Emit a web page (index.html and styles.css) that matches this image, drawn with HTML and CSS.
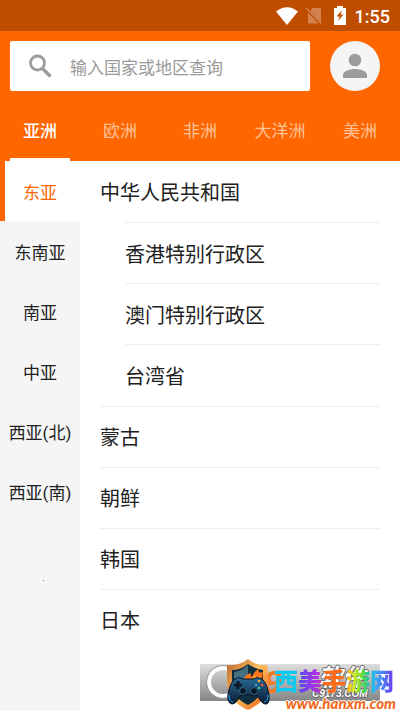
FILE: index.html
```html
<!DOCTYPE html>
<html lang="zh-CN">
<head>
<meta charset="utf-8">
<meta name="viewport" content="width=device-width, initial-scale=1">
<title>选择国家或地区</title>
<link rel="stylesheet" href="styles.css">
</head>
<body>
<div class="status">
  <svg width="24" height="20" viewBox="0 0 24 20" aria-hidden="true"><path fill="#fff" d="M1 5.500Q12-3 23 5.500L12 19Z"/></svg>
  <svg class="sim" width="18" height="18" viewBox="0 0 18 18" aria-hidden="true"><path fill="#d18250" d="M7 1h8q1 0 1 1v13L5.500 4.500ZM3 5.500 13.500 16.500H4q-1 0-1-1Z"/><path stroke="#d18250" stroke-width="1.500" d="M1 1 16.500 16.500"/></svg>
  <svg class="battery" width="14" height="20" viewBox="0 0 14 20" aria-hidden="true"><path fill="#fff" d="M4 0h6v2h3v17H1V2h3Z"/><path fill="#bf4d00" d="M9 4 3.500 10.500h3L5 15l5.500-6.500h-3Z"/></svg>
  <span>1:55</span>
</div>
<header class="header">
  <div class="top">
    <label class="search">
      <svg width="24" height="24" viewBox="0 0 24 24" aria-hidden="true"><circle cx="9.500" cy="9" r="7" fill="none" stroke="#9c9c9c" stroke-width="2.800"/><path d="m14 14 8.500 8.500" stroke="#9c9c9c" stroke-width="3.200"/></svg>
      <input type="text" placeholder="输入国家或地区查询" aria-label="输入国家或地区查询">
    </label>
    <button class="avatar" aria-label="用户">
      <svg width="26" height="26" viewBox="0 0 26 26" aria-hidden="true"><circle cx="13" cy="7" r="6.300" fill="#9c9c9c"/><path fill="#9c9c9c" d="M1 25v-3c0-4 7-6 12-6s12 2 12 6v3Z"/></svg>
    </button>
  </div>
  <nav class="tabs">
    <a class="tab active" href="#asia">亚洲</a>
    <a class="tab" href="#europe">欧洲</a>
    <a class="tab" href="#africa">非洲</a>
    <a class="tab" href="#oceania">大洋洲</a>
    <a class="tab" href="#america">美洲</a>
  </nav>
</header>
<main class="main">
  <nav class="side">
    <a class="region current" href="#east">东亚</a>
    <a class="region" href="#southeast">东南亚</a>
    <a class="region" href="#south">南亚</a>
    <a class="region" href="#central">中亚</a>
    <a class="region" href="#westnorth">西亚(北)</a>
    <a class="region" href="#westsouth">西亚(南)</a>
    <i class="dot"></i>
  </nav>
  <ul class="list">
    <li>中华人民共和国</li>
    <li class="sub">香港特别行政区</li>
    <li class="sub">澳门特别行政区</li>
    <li class="sub">台湾省</li>
    <li>蒙古</li>
    <li>朝鲜</li>
    <li>韩国</li>
    <li>日本</li>
  </ul>
</main>
<div class="mark">
  <div class="bar"><i class="ring"></i><b class="nine">9</b><div class="under">软件</div><div class="domain">C9173.COM</div></div>
  <svg class="shield" width="46" height="52" viewBox="0 0 46 52" aria-hidden="true">
    <defs><linearGradient id="rim" x2="1" y2="1"><stop stop-color="#b5602a"/><stop offset=".45" stop-color="#ffc061"/><stop offset="1" stop-color="#ed5a0b"/></linearGradient><linearGradient id="pad" x2="0" y2="1"><stop stop-color="#286b94"/><stop offset="1" stop-color="#0a1930"/></linearGradient></defs>
    <path fill="url(#rim)" d="M23 0Q31 7 42 6l2 18q-1 18-21 27Q4 43 2 25V6q13 1 21-6Z"/>
    <path fill="#102e40" d="M23 5q7 5 15 6v14q-1 14-15 21Q8 39 7 25V11q9 0 16-6Z"/>
    <path fill="#467080" d="M23 6v17L9 20v-7q8-1 14-7Z"/>
    <path fill="#ff7518" d="M18 22q2-7 8-8-1 3 1 4 2-6 7-8-2 5 4 3l-2 12Z"/><path fill="#ffc72b" d="M22 22q6-1 8-6l1 4 4-3-2 7Z"/>
    <path fill="url(#pad)" stroke="#071326" d="M10 20q3-3 8 0h10q5-3 9 0 5 4 7 16 1 10-4 9-4-1-8-9H16q-5 9-9 9-5-1-4-10 2-12 7-15Z"/>
    <path stroke="#0c1a29" stroke-width="3" d="M9 26h8M13 22v8"/>
    <circle cx="18" cy="32" r="3.500" fill="#091827" stroke="#2b6682"/><circle cx="29" cy="32" r="3.500" fill="#091827" stroke="#2b6682"/>
    <circle cx="34" cy="22" r="1.300" fill="#ffb331"/><circle cx="31" cy="26" r="1.300" fill="#3b9de0"/><circle cx="37" cy="26" r="1.300" fill="#ff5137"/><circle cx="34" cy="29" r="1.300" fill="#36cba0"/>
    <path d="M4 36q0 7 4 7M43 36q0 7-4 7" fill="none" stroke="#18a8ff"/>
  </svg>
  <div class="brand">西美手游网</div>
  <div class="url">www.hanxm.com</div>
</div>
</body>
</html>
```

FILE: styles.css
```css
* { box-sizing: border-box; }
body {
  margin: 0;
  min-height: 100vh;
  display: flex;
  flex-direction: column;
  position: relative;
  background: #fff;
  color: #212121;
  font-family: "Noto Sans CJK SC", sans-serif;
}
a { color: inherit; text-decoration: none; }
.status {
  height: 31px;
  padding: 0 10px;
  display: flex;
  align-items: center;
  justify-content: flex-end;
  background: #bf4d00;
  color: #fff;
  font: 500 18px/30px Roboto, sans-serif;
}
.status span { padding-top: 2px; }
.sim { margin: 0 10px 0 6px; }
.battery { margin-right: 8px; }
.header { background: #ff6600; }
.top {
  padding: 10px 20px 0 10px;
  display: flex;
  gap: 20px;
}
.search {
  flex: 1;
  min-width: 0;
  height: 50px;
  padding-left: 18px;
  display: flex;
  align-items: center;
  gap: 16px;
  background: #fff;
  border-radius: 2px;
}
.search input {
  flex: 1;
  min-width: 0;
  padding: 2px 2px 0;
  border: 0;
  outline: 0;
  background: transparent;
  font: 17px/26px "Noto Sans CJK SC", sans-serif;
}
.search input::placeholder { color: #999; opacity: 1; }
.avatar {
  width: 50px;
  height: 50px;
  padding: 0;
  display: grid;
  place-items: center;
  border: 0;
  border-radius: 50%;
  background: #f5f5f5;
}
.tabs {
  height: 70px;
  display: grid;
  grid-template-columns: repeat(5, 1fr);
}
.tab {
  display: flex;
  align-items: center;
  justify-content: center;
  margin: 0 10px;
  padding: 13px 0 2px;
  border-bottom: 3px solid transparent;
  color: #ffc299;
  font-size: 17px;
  line-height: 26px;
  white-space: nowrap;
}
.tab.active { color: #fff; border-color: #fff; font-weight: 500; }
.main { flex: 1; display: flex; }
.side { width: 80px; background: #f5f5f5; }
.region {
  height: 60px;
  display: flex;
  align-items: center;
  justify-content: center;
  padding-top: 4px;
  font: 17px/24px Roboto, "Noto Sans CJK SC", sans-serif;
  white-space: nowrap;
}
.region.current {
  background: #fff;
  border-left: 5px solid #ff6600;
  padding-right: 5px;
  color: #ff6600;
}
.dot {
  display: block;
  width: 1px;
  height: 1px;
  margin: 59px 0 0 43px;
  background: #777;
}
.list {
  flex: 1;
  align-self: flex-start;
  min-height: 489px;
  margin: 0;
  padding: 0 20px;
  display: grid;
  grid-auto-rows: 1fr;
  list-style: none;
  font-size: 20px;
}
.list li {
  display: flex;
  align-items: center;
}
.list li + li { border-top: 1px solid #eee; }
.list .sub { margin-left: 25px; }
.mark {
  position: absolute;
  right: 0;
  bottom: 0;
  width: 200px;
  height: 54px;
}
.bar {
  position: absolute;
  inset: 7px 20px 10px 0;
  background: linear-gradient(#dedede, #858585);
}
.ring {
  position: absolute;
  left: 7px;
  top: 2px;
  width: 32px;
  height: 32px;
  border: 4px solid #fff;
  border-radius: 50%;
  outline: 1px solid #999;
}
.nine {
  position: absolute;
  left: 64px;
  top: 0;
  color: #f07b25;
  font: italic bold 32px/36px "Liberation Sans", sans-serif;
}
.under, .domain {
  position: absolute;
  left: 118px;
  color: #fff;
  text-shadow: 1px 0 #666, -1px 0 #666, 0 1px #666, 0 -1px #666;
}
.under {
  top: 0;
  font: italic bold 24px/24px "Noto Sans CJK SC", sans-serif;
}
.domain {
  left: 112px;
  bottom: 1px;
  font: italic bold 10px/12px "Liberation Sans", sans-serif;
}
.shield { position: absolute; left: 25px; top: 2px; }
.brand {
  position: absolute;
  right: 6px;
  top: 8px;
  font: 900 24px/30px "Noto Sans CJK SC", sans-serif;
  white-space: nowrap;
  color: transparent;
  background: linear-gradient(90deg, #10c8f0 0 18%, #5b48f5 21%, #b52ee0 37%, #ff6a18 42% 58%, #ffb010 61%, #d8ea20 66%, #7be02c 72%, #16c8a0 79%, #2cb0ff 84%, #7538eb);
  background-clip: text;
}
.url {
  position: absolute;
  right: 4px;
  bottom: 0;
  color: #f26a21;
  font: italic 900 15px/16px Lato, sans-serif;
  text-shadow: 1px 0 #fff, -1px 0 #fff, 0 1px #fff, 0 -1px #fff;
}
```
